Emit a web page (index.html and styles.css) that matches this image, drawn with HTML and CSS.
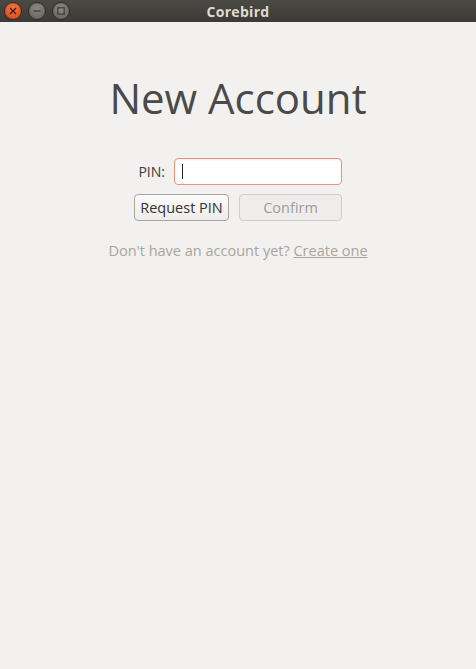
FILE: index.html
```html
<!DOCTYPE html>
<html>
<head>
<meta charset="utf-8">
<link rel="stylesheet" href="styles.css">
</head>
<body>
<div class="window">
  <header class="titlebar">
    <div class="controls">
      <span class="wbtn close"><svg width="8" height="8" viewBox="0 0 8 8"><path d="M1 1L7 7M7 1L1 7" stroke="#3c1a0e" stroke-width="1.3"/></svg></span>
      <span class="wbtn min"><svg width="8" height="8" viewBox="0 0 8 8"><path d="M0.5 4H7.5" stroke="#3c3b37" stroke-width="1.3"/></svg></span>
      <span class="wbtn max"><svg width="8" height="8" viewBox="0 0 8 8"><rect x="0.8" y="0.8" width="6.4" height="6.4" fill="none" stroke="#3c3b37" stroke-width="1.2"/></svg></span>
    </div>
    <div class="title">Corebird</div>
  </header>
  <main class="content">
    <h1 class="heading">New Account</h1>
    <div class="form">
      <div class="pin-row">
        <label class="pin-label">PIN:</label>
        <div class="pin-input"><span class="caret"></span></div>
      </div>
      <div class="btn-row">
        <button class="btn">Request PIN</button>
        <button class="btn disabled">Confirm</button>
      </div>
    </div>
    <p class="signup">Don't have an account yet? <a class="link">Create one</a></p>
  </main>
</div>
</body>
</html>
```

FILE: styles.css
```css
html, body {
  margin: 0;
  padding: 0;
  width: 476px;
  height: 669px;
  overflow: hidden;
  background: #f2f1f0;
  font-family: "Open Sans", "Noto Sans", sans-serif;
}
.window {
  display: flex;
  flex-direction: column;
  height: 669px;
}
.titlebar {
  position: relative;
  height: 22px;
  background: linear-gradient(#4a4944, #3c3b37);
  display: flex;
  align-items: center;
  justify-content: center;
}
.controls {
  position: absolute;
  left: 4px;
  top: 2px;
  display: flex;
  gap: 6px;
}
.wbtn {
  width: 18px;
  height: 18px;
  border-radius: 50%;
  display: flex;
  align-items: center;
  justify-content: center;
  box-sizing: border-box;
  border: 1px solid #2c2b28;
}
.close {
  background: radial-gradient(circle at 50% 35%, #f3784b, #e0501f 70%);
}
.min, .max {
  background: radial-gradient(circle at 50% 35%, #8b8a85, #6b6a65 70%);
}
.title {
  color: #dfdbd2;
  font-weight: bold;
  font-size: 14px;
  letter-spacing: 0.3px;
}
.content {
  flex: 1;
  display: flex;
  flex-direction: column;
  align-items: center;
}
.heading {
  margin: 46px 0 0 0;
  font-weight: normal;
  font-size: 42px;
  line-height: 60px;
  color: #4a4a4a;
}
.form {
  margin-top: 30px;
  width: 208px;
  display: flex;
  flex-direction: column;
  gap: 9px;
}
.pin-row {
  display: flex;
  align-items: center;
  justify-content: flex-end;
  gap: 9px;
}
.pin-label {
  font-size: 14px;
  color: #3c3c3c;
}
.pin-input {
  width: 168px;
  height: 27px;
  box-sizing: border-box;
  border: 1px solid #e5967a;
  border-radius: 4px;
  background: #fff;
  box-shadow: inset 0 1px 2px rgba(0,0,0,0.08);
  display: flex;
  align-items: center;
  padding-left: 7px;
}
.caret {
  width: 1px;
  height: 15px;
  background: #222;
}
.btn-row {
  display: flex;
  gap: 10px;
}
.btn {
  height: 27px;
  box-sizing: border-box;
  border: 1px solid #a8a6a1;
  border-radius: 4px;
  background: linear-gradient(#fbfbfa, #eeedeb);
  font-family: inherit;
  font-size: 14.5px;
  color: #333;
  padding: 0 2px;
  width: 95px;
}
.btn.disabled {
  width: 103px;
  border-color: #cfcdca;
  background: #eeedeb;
  color: #9e9c99;
}
.signup {
  margin: 20px 0 0 0;
  font-size: 14.5px;
  color: #aaa59e;
}
.link {
  color: #aaa59e;
  text-decoration: underline;
}
```
